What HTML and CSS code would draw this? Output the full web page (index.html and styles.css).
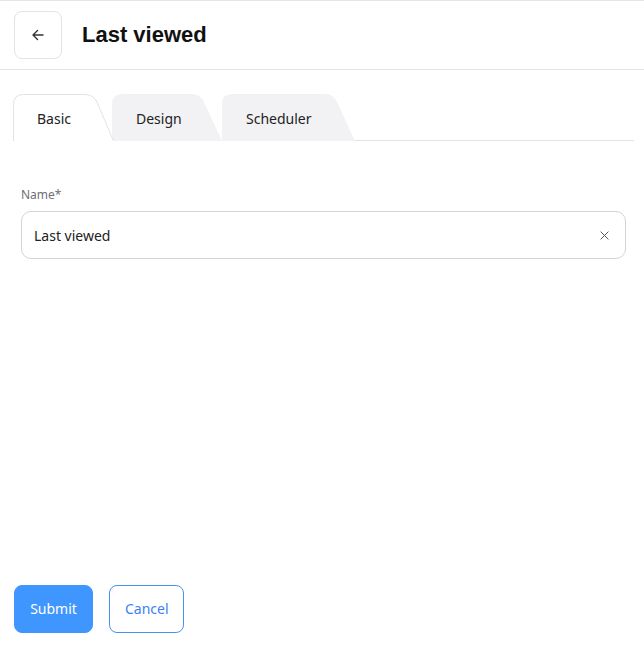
FILE: index.html
```html
<!DOCTYPE html>
<html>
<head>
<meta charset="utf-8">
<link rel="stylesheet" href="styles.css">
</head>
<body>
<div class="page">
  <header class="header">
    <button class="back" aria-label="Back">
      <svg width="14" height="14" viewBox="0 0 14 14" fill="none" stroke="#333" stroke-width="1.4" stroke-linecap="round" stroke-linejoin="round"><path d="M12 7H2M6.5 2.5 2 7l4.5 4.5"/></svg>
    </button>
    <h1 class="title">Last viewed</h1>
  </header>
  <main class="main">
    <nav class="tabs">
      <div class="tab tab-active tab-basic">
        <svg class="tab-bg" width="101" height="47" viewBox="0 0 101 47"><path d="M0.5 47V10.5Q0.5 0.5 10.5 0.5H72Q80 0.5 84 8L100.5 47" fill="#fff" stroke="#e2e2e8"/></svg>
        <span class="tab-label">Basic</span>
      </div>
      <div class="tab tab-design">
        <svg class="tab-bg" width="110" height="47" viewBox="0 0 110 47"><path d="M0 47V10Q0 0 10 0H80Q88 0 92 8L110 47Z" fill="#f2f2f5"/></svg>
        <span class="tab-label">Design</span>
      </div>
      <div class="tab tab-scheduler">
        <svg class="tab-bg" width="133" height="47" viewBox="0 0 133 47"><path d="M0 47V10Q0 0 10 0H103Q111 0 115 8L133 47Z" fill="#f2f2f5"/></svg>
        <span class="tab-label">Scheduler</span>
      </div>
    </nav>
    <section class="form">
      <label class="label">Name*</label>
      <div class="input">
        <span class="input-value">Last viewed</span>
        <svg class="clear" width="9" height="9" viewBox="0 0 10 10" stroke="#555" stroke-width="1.1" stroke-linecap="round"><path d="M1 1l8 8M9 1 1 9"/></svg>
      </div>
    </section>
  </main>
  <footer class="footer">
    <button class="btn btn-primary">Submit</button>
    <button class="btn btn-outline">Cancel</button>
  </footer>
</div>
</body>
</html>
```
FILE: styles.css
```css
* { box-sizing: border-box; }
html, body { margin: 0; padding: 0; }
body {
  font-family: "Noto Sans", "Open Sans", sans-serif;
  color: #222;
  background: #fff;
}
.page {
  height: 100vh;
  display: flex;
  flex-direction: column;
  border-top: 1px solid #e4e4ea;
}
.header {
  display: flex;
  align-items: center;
  gap: 20px;
  padding: 10px 14px;
  border-bottom: 1px solid #e2e2e8;
}
.back {
  width: 48px;
  height: 48px;
  border: 1px solid #e2e2e8;
  border-radius: 8px;
  background: #fff;
  display: flex;
  align-items: center;
  justify-content: center;
  padding: 0;
}
.title {
  margin: 0;
  font-family: "Liberation Sans", Arial, sans-serif;
  font-weight: 700;
  font-size: 22px;
  color: #111;
}
.main {
  flex: 1;
  padding: 24px 10px 0 13px;
}
.tabs {
  display: flex;
  height: 47px;
  border-bottom: 1px solid #e2e2e8;
}
.tab {
  position: relative;
  height: 46px;
  display: flex;
  align-items: center;
  padding-top: 2px;
  font-size: 14px;
  color: #222;
}
.tab-bg {
  position: absolute;
  left: 0;
  top: 0;
}
.tab-label { position: relative; }
.tab-basic { width: 99px; padding-left: 24px; z-index: 2; }
.tab-design { width: 110px; padding-left: 24px; z-index: 1; }
.tab-scheduler { width: 133px; padding-left: 24px; }
.form {
  padding: 45px 8px 0 8px;
  display: flex;
  flex-direction: column;
  gap: 8px;
}
.label {
  font-size: 12px;
  color: #6f6f75;
  line-height: 17px;
}
.input {
  height: 48px;
  border: 1px solid #d4d4d8;
  border-radius: 10px;
  display: flex;
  align-items: center;
  justify-content: space-between;
  padding: 1px 16px 0 12px;
  font-size: 14px;
  color: #222;
}
.footer {
  display: flex;
  gap: 16px;
  padding: 0 14px 24px;
}
.btn {
  height: 48px;
  border-radius: 8px;
  font-family: "Noto Sans", "Open Sans", sans-serif;
  font-size: 14px;
  padding: 0 15px 2px;
}
.btn-primary {
  background: #4096ff;
  border: 1px solid #4096ff;
  color: #fff;
  width: 79px;
}
.btn-outline {
  background: #fff;
  border: 1px solid #4a90f0;
  color: #3b82f0;
  width: 75px;
}
```
